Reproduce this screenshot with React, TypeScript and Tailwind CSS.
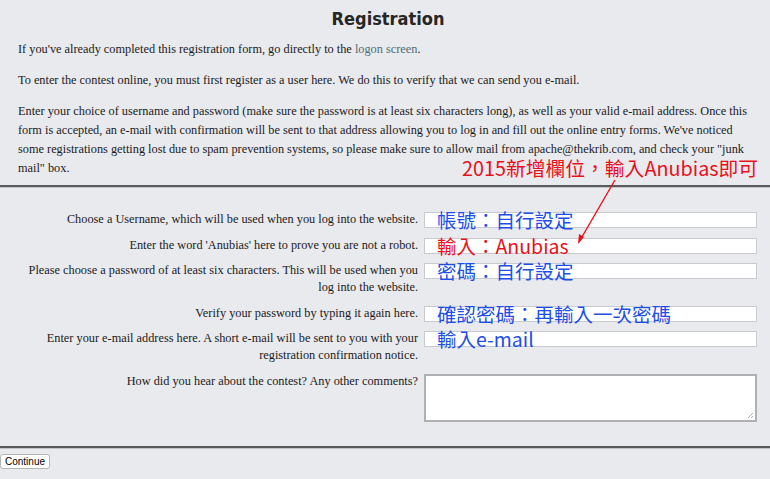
import React from "react";

const serif = { fontFamily: '"Liberation Serif", "Times New Roman", serif' };
const cjk = '"Noto Sans CJK TC", "Noto Sans", sans-serif';

type Row = {
  label: string[];
  note?: string;
  noteColor?: string;
  area?: boolean;
};

const rows: Row[] = [
  { label: ["Choose a Username, which will be used when you log into the website."], note: "帳號：自行設定", noteColor: "text-[#1d4fe8]" },
  { label: ["Enter the word 'Anubias' here to prove you are not a robot."], note: "輸入：Anubias", noteColor: "text-[#e8101a]" },
  { label: ["Please choose a password of at least six characters. This will be used when you", "log into the website."], note: "密碼：自行設定", noteColor: "text-[#1d4fe8]" },
  { label: ["Verify your password by typing it again here."], note: "確認密碼：再輸入一次密碼", noteColor: "text-[#1d4fe8]" },
  { label: ["Enter your e-mail address here. A short e-mail will be sent to you with your", "registration confirmation notice."], note: "輸入e-mail", noteColor: "text-[#1d4fe8]" },
  { label: ["How did you hear about the contest? Any other comments?"], area: true },
];

function Rule() {
  return <div className="h-[3px] border-t-2 border-[#5a5a5a] border-b border-b-[#c4c5c9]" />;
}

export default function App() {
  return (
    <div className="relative w-[770px] h-[479px] overflow-hidden bg-[#e9eaee] text-[#1a1a1a]">
      <div className="pt-[7px]">
        <h1
          className="pl-[6px] text-center text-[18px] leading-[24px] font-bold text-[#262626]"
          style={{ fontFamily: '"DejaVu Sans Condensed", "Liberation Sans", sans-serif' }}
        >
          Registration
        </h1>
        <div className="pl-[18px] pr-[16px] text-[12.3px] leading-[19px]" style={serif}>
          <p className="mt-[9px]">
            If you've already completed this registration form, go directly to the{" "}
            <a className="text-[#4d6d74]">logon screen</a>.
          </p>
          <p className="mt-[12px]">
            To enter the contest online, you must first register as a user here. We do this to verify that we can send you e-mail.
          </p>
          <p className="mt-[12px]">
            Enter your choice of username and password (make sure the password is at least six characters long), as well as your valid e-mail address. Once this form is accepted, an e-mail with confirmation will be sent to that address allowing you to log in and fill out the online entry forms. We've noticed some registrations getting lost due to spam prevention systems, so please make sure to allow mail from apache@thekrib.com, and check your "junk mail" box.
          </p>
        </div>
      </div>

      <div className="mt-[7px]">
        <Rule />
      </div>

      <div className="pt-[23px] flex flex-col gap-[8.5px] text-[12.3px] leading-[17px]" style={serif}>
        {rows.map((r, i) => (
          <div key={i} className="flex items-start">
            <div className="w-[418px] pl-[20px] text-right">
              {r.label.map((l, j) => (
                <div key={j}>{l}</div>
              ))}
            </div>
            <div className="ml-[6px] w-[333px]">
              {r.area ? (
                <div className="relative mt-[1.5px] h-[48px] bg-white border-2 border-[#b0b0b3]">
                  <svg className="absolute right-[1px] bottom-[1px]" width="7" height="7" viewBox="0 0 7 7">
                    <path d="M1 6L6 1M4 6L6 4" stroke="#999" strokeWidth="0.8" />
                  </svg>
                </div>
              ) : (
                <div className="relative mt-[1px] h-[16px] bg-white border border-[#c9cacd]">
                  {r.note && (
                    <span
                      className={`absolute left-[12px] top-1/2 -translate-y-1/2 whitespace-nowrap text-[19.5px] leading-none ${r.noteColor}`}
                      style={{ fontFamily: cjk }}
                    >
                      {r.note}
                    </span>
                  )}
                </div>
              )}
            </div>
          </div>
        ))}
      </div>

      <div className="mt-[24px]">
        <Rule />
      </div>

      <div className="mt-[5px] flex">
        <button
          className="h-[15px] px-[4px] rounded-[3px] bg-white border border-[#b5b5b5] text-[10px] leading-[13px] text-black"
          style={{ fontFamily: '"Liberation Sans", Arial, sans-serif' }}
        >
          Continue
        </button>
      </div>

      <span
        className="absolute left-[462px] top-[157px] whitespace-nowrap text-[19.8px] leading-[22px] text-[#e8101a]"
        style={{ fontFamily: cjk }}
      >
        2015新增欄位，輸入Anubias即可
      </span>

      <svg className="absolute left-[570px] top-[176px]" width="52" height="74" viewBox="0 0 52 74">
        <path d="M45 4 L9 66" stroke="#e8101a" strokeWidth="1.4" fill="none" />
        <path d="M8 68 L9 58 L14 61 Z" fill="#e8101a" />
      </svg>
    </div>
  );
}
